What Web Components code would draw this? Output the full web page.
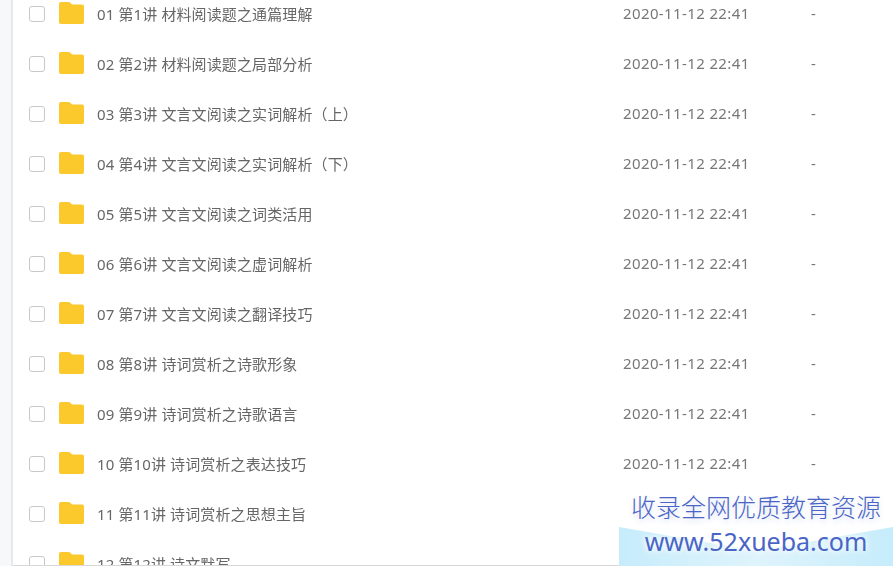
<!DOCTYPE html>
<html>
<head>
<meta charset="utf-8">
<style>
  html,body{margin:0;height:100%;overflow:hidden;background:#fff}
  body{font-family:"Noto Sans","Noto Sans CJK SC",sans-serif}
</style>
</head>
<body>
<file-page></file-page>
<script>
  // rows 11 and 12 sit under the watermark, so they show no time or size
  const ROWS = [
    ["01 第1讲 材料阅读题之通篇理解", 1],
    ["02 第2讲 材料阅读题之局部分析", 1],
    ["03 第3讲 文言文阅读之实词解析（上）", 1],
    ["04 第4讲 文言文阅读之实词解析（下）", 1],
    ["05 第5讲 文言文阅读之词类活用", 1],
    ["06 第6讲 文言文阅读之虚词解析", 1],
    ["07 第7讲 文言文阅读之翻译技巧", 1],
    ["08 第8讲 诗词赏析之诗歌形象", 1],
    ["09 第9讲 诗词赏析之诗歌语言", 1],
    ["10 第10讲 诗词赏析之表达技巧", 1],
    ["11 第11讲 诗词赏析之思想主旨", 0],
    ["12 第12讲 诗文默写", 0],
  ];

  class FileRow extends HTMLElement {
    connectedCallback() {
      if (this.shadowRoot) return;
      const meta = this.hasAttribute("meta");
      const shadow = this.attachShadow({ mode: "open" });
      shadow.innerHTML = `
        <style>
          :host{display:grid;grid-template-columns:30px 38px 526px 189px 1fr;align-items:center;height:50px;padding-left:16px;color:#666;font-size:15px;white-space:nowrap}
          .check{width:16px;height:16px;box-sizing:border-box;border:1.5px solid #c8c8c8;border-radius:3px;background:#fff}
          svg{width:25px;height:22px;display:block;margin-top:-3px}
          span{margin-top:-2px}
          .check{margin-top:0}
          .name{letter-spacing:.12px}
          .time{letter-spacing:.38px;color:#777}
          .size{color:#777;margin-left:-1px}
        </style>
        <span class="check"></span>
        <svg viewBox="0 0 25 22" aria-hidden="true"><path d="M0 2C0 .7 .7 0 2 0H9c1.200 0 1.900.4 2.600 1.100L13 2.500H23c1.400 0 2 .8 2 2.200V20c0 1.400-.7 2-2 2H2c-1.300 0-2-.7-2-2z" fill="#fbc92c"/></svg>
        <span class="name"><slot></slot></span>
        ${meta ? '<span class="time">2020-11-12 22:41</span><span class="size">-</span>' : ""}
      `;
    }
  }

  class FileList extends HTMLElement {
    connectedCallback() {
      if (this.shadowRoot) return;
      const shadow = this.attachShadow({ mode: "open" });
      shadow.innerHTML = `
        <style>
          :host{display:block;margin-top:-11px;filter:blur(.35px)}
        </style>
        <slot></slot>
      `;
      this.innerHTML = ROWS.map(([name, meta]) => `<file-row${meta ? " meta" : ""}>${name}</file-row>`).join("");
    }
  }

  class WaterMark extends HTMLElement {
    connectedCallback() {
      if (this.shadowRoot) return;
      const shadow = this.attachShadow({ mode: "open" });
      shadow.innerHTML = `
        <style>
          :host{position:absolute;right:0;bottom:0;width:274px;height:76px;display:flex;flex-direction:column;align-items:center;color:#4a65c6;white-space:nowrap}
          svg{position:absolute;left:0;bottom:0;width:274px;height:39px}
          .a,.b{position:relative}
          .a{font-size:25px;line-height:36px;margin-top:-1px;font-weight:300;text-shadow:0 3px 5px rgba(74,103,198,.22)}
          .b{font-size:25px;line-height:34px;margin-top:-1px;text-shadow:0 0 6px #fff,0 0 6px #fff}
        </style>
        <svg viewBox="0 0 274 39" aria-hidden="true">
          <defs><linearGradient id="g" x1="0" y1="0" x2="1" y2="0"><stop offset="0" stop-color="#c6ecfb"/><stop offset=".5" stop-color="#dff4fc"/><stop offset="1" stop-color="#c6ecfb"/></linearGradient></defs>
          <path d="M0 0L137 24 274 0V39H0z" fill="url(#g)"/>
        </svg>
        <span class="a">收录全网优质教育资源</span>
        <span class="b">www.52xueba.com</span>
      `;
    }
  }

  class FilePage extends HTMLElement {
    connectedCallback() {
      if (this.shadowRoot) return;
      const shadow = this.attachShadow({ mode: "open" });
      shadow.innerHTML = `
        <style>
          :host{display:flex;position:relative;width:893px;height:566px;overflow:hidden;background:#fff}
          .side{flex:none;width:11px;background:#f7f8fa;border-right:2px solid #e6e8ec}
          .main{flex:1;min-width:0;height:566px;overflow:hidden;position:relative}
          .line{position:absolute;left:0;right:0;bottom:0;height:1px;background:#d8d8d8}
        </style>
        <div class="side"></div>
        <div class="main"><file-list></file-list><div class="line"></div></div>
        <water-mark></water-mark>
      `;
    }
  }

  customElements.define("file-row", FileRow);
  customElements.define("file-list", FileList);
  customElements.define("water-mark", WaterMark);
  customElements.define("file-page", FilePage);
</script>
</body>
</html>
